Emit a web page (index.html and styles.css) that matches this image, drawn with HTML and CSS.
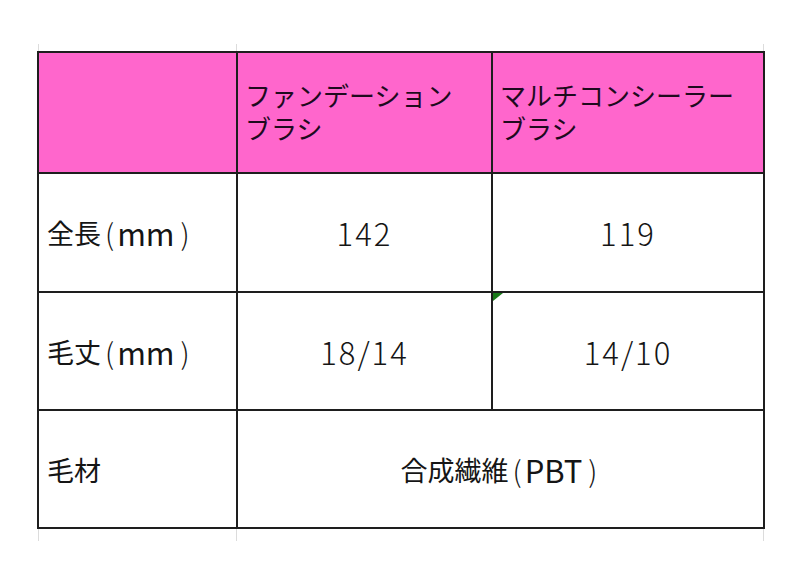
FILE: index.html
```html
<!DOCTYPE html>
<html lang="ja">
<head>
<meta charset="utf-8">
<link rel="stylesheet" href="styles.css">
</head>
<body>
<div class="sheet">
  <div class="grid">
    <div class="cell head"></div>
    <div class="cell head text"><span class="ln">ファンデーション</span><span class="ln">ブラシ</span></div>
    <div class="cell head text"><span class="ln">マルチコンシーラー</span><span class="ln">ブラシ</span></div>

    <div class="cell label">全長<span class="par">(</span><span class="lat">mm</span><span class="par">)</span></div>
    <div class="cell num">142</div>
    <div class="cell num">119</div>

    <div class="cell label">毛丈<span class="par">(</span><span class="lat">mm</span><span class="par">)</span></div>
    <div class="cell num">18/14</div>
    <div class="cell num mark">14/10</div>

    <div class="cell label">毛材</div>
    <div class="cell center span2">合成繊維<span class="par">(</span><span class="lat">PBT</span><span class="par">)</span></div>
  </div>
</div>
</body>
</html>
```

FILE: styles.css
```css
html, body {
  margin: 0;
  padding: 0;
  background: #ffffff;
}

body {
  font-family: "Noto Sans CJK JP", "Noto Sans", sans-serif;
  color: #151515;
}

.sheet {
  margin: 44px 0 0 37px;
  padding: 7px 0 12px 0;
  width: 728px;
  background:
    linear-gradient(#dcdcdc, #dcdcdc) 1px 0 / 1px 100% no-repeat,
    linear-gradient(#dcdcdc, #dcdcdc) 199px 0 / 1px 100% no-repeat,
    linear-gradient(#dcdcdc, #dcdcdc) 726px 0 / 1px 100% no-repeat;
}

.grid {
  display: grid;
  grid-template-columns: 197px 253px 270px;
  grid-template-rows: 119px 117px 116px 116px;
  gap: 2px;
  padding: 2px;
  background: #1e1e1e;
  width: 724px;
}

.cell {
  background: #ffffff;
  font-size: 27px;
  line-height: 33px;
  display: flex;
  align-items: center;
  position: relative;
  white-space: pre;
}

.head {
  background: #ff66cc;
  color: #1e0a1e;
  font-size: 26px;
}

.text {
  flex-direction: column;
  align-items: flex-start;
  justify-content: center;
  padding: 0 0 4px 7px;
}

.ln {
  display: block;
  height: 33px;
  line-height: 33px;
}

.label {
  padding-left: 8px;
}

.num {
  justify-content: center;
  font-size: 31px;
  font-weight: 300;
  letter-spacing: 2px;
}

.center {
  justify-content: center;
}

.par {
  font-size: 29px;
  font-weight: 300;
  margin: 0 3px 0 4px;
}

.par + .lat {
  margin-left: 0;
}

.lat + .par {
  margin-left: 6px;
}

.lat {
  font-size: 31px;
  font-weight: 400;
}

.span2 {
  grid-column: 2 / 4;
}

.mark::before {
  content: "";
  position: absolute;
  left: 0;
  top: 0;
  width: 0;
  height: 0;
  border-top: 8px solid #1a7a1a;
  border-right: 10px solid transparent;
}
```
